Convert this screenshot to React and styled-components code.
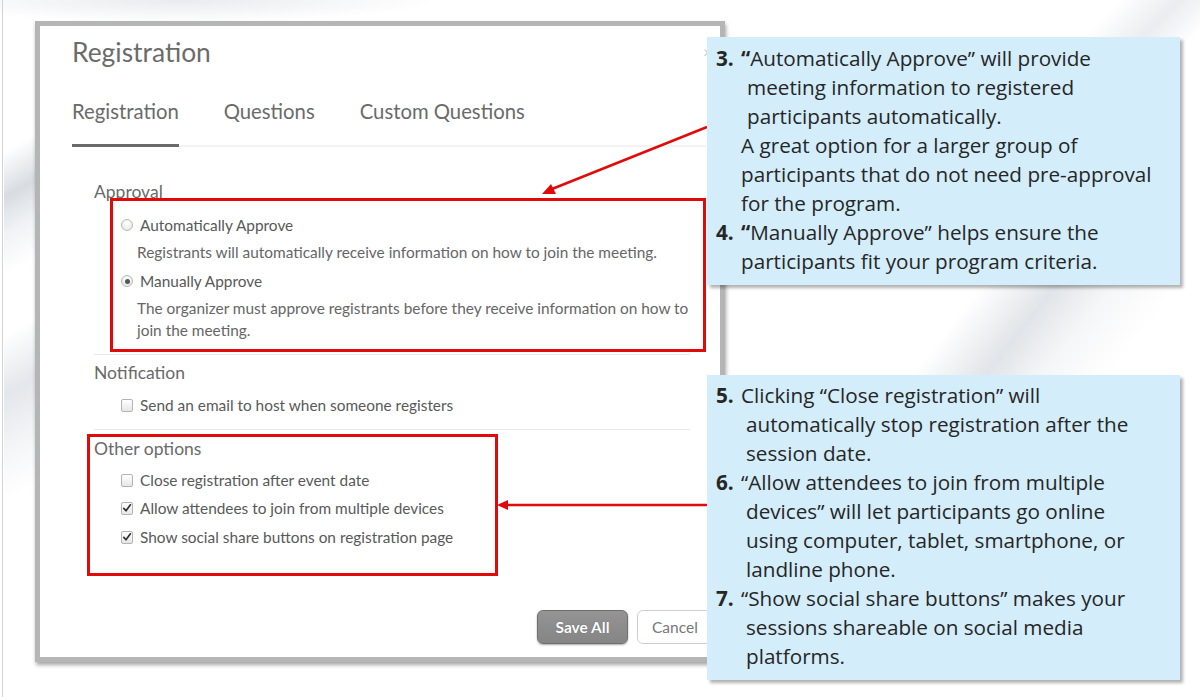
import React from "react";
import styled, { createGlobalStyle } from "styled-components";

const GlobalStyle = createGlobalStyle`
  html, body {
    margin: 0;
    padding: 0;
    background: #ffffff;
  }
  body {
    font-family: Lato, "Liberation Sans", sans-serif;
  }
`;

const Slide = styled.div`
  position: relative;
  width: 1200px;
  height: 697px;
  overflow: hidden;
  background:
    linear-gradient(to right, transparent 2px, #d2d2d2 2px, #d2d2d2 3px, transparent 3px) 0 0 / 4px 697px no-repeat,
    linear-gradient(150deg, transparent 20%, rgba(190, 197, 206, 0.6) 42%, rgba(226, 230, 235, 0.5) 60%, transparent 80%) 4px 110px / 32px 190px no-repeat,
    linear-gradient(150deg, transparent 15%, rgba(205, 210, 218, 0.55) 40%, rgba(232, 235, 239, 0.45) 65%, transparent 85%) 4px 300px / 32px 220px no-repeat,
    linear-gradient(128deg, transparent 30%, rgba(205, 210, 217, 0.6) 48%, rgba(236, 238, 241, 0.5) 62%, transparent 78%) 860px 283px / 340px 92px no-repeat,
    linear-gradient(135deg, transparent 40%, rgba(214, 218, 224, 0.5) 70%, transparent 95%) 1040px 0 / 160px 40px no-repeat,
    radial-gradient(ellipse 260px 22px at 180px 0, rgba(214, 218, 224, 0.55), transparent) 0 0 / 700px 24px no-repeat,
    #ffffff;
`;

const Stage = styled.div`
  display: flex;
  align-items: flex-start;
  padding: 21px 0 0 35px;
`;

/* ---------- dialog (screenshot) ---------- */

const Dialog = styled.section`
  box-sizing: border-box;
  width: 690px;
  height: 641px;
  background: #ffffff;
  border: 5px solid #b5b5b5;
  box-shadow: 1px 3px 4px rgba(0, 0, 0, 0.35);
  display: flex;
  flex-direction: column;
  padding: 10px 8px 13px 32px;
  color: #666;
`;

const Header = styled.div`
  display: flex;
  justify-content: space-between;
  align-items: flex-start;
`;

const Title = styled.h1`
  margin: 0;
  font-size: 26.4px;
  line-height: 32px;
  font-weight: 400;
  color: #6b6b6b;
`;

const Close = styled.span`
  margin-top: 9px;
  font-size: 15px;
  line-height: 15px;
  color: #c8c8c8;
`;

const TabBar = styled.div`
  display: flex;
  gap: 45px;
  margin: 31px 6px 0 0;
  border-bottom: 2px solid #f3f3f3;
`;

const Tab = styled.div`
  font-size: 20.3px;
  line-height: 24px;
  color: #6a6a6a;
  padding-bottom: 21px;
  margin-bottom: -2px;
  border-bottom: 3px solid ${(p) => (p.$active ? "#6b6b6b" : "transparent")};
`;

const Body = styled.div`
  display: flex;
  flex-direction: column;
  margin: 35px 22px 0 22px;
`;

const Section = styled.div`
  display: flex;
  flex-direction: column;
  padding: ${(p) => p.$pad || "0 0 13px"};
  border-top: ${(p) => (p.$divided ? "1px solid #e8e8e8" : "none")};
`;

const SectionLabel = styled.div`
  font-size: 17.5px;
  line-height: 20px;
  color: #6a6a6a;
`;

const OptionRow = styled.label`
  display: flex;
  align-items: center;
  gap: 7px;
  height: 22px;
  margin: ${(p) => p.$gap || 0}px 0 0 27px;
  font-size: 15.4px;
  color: #595959;
`;

const Desc = styled.div`
  margin: 5px 0 0 43px;
  font-size: 15.4px;
  line-height: 22px;
  color: #666;
  white-space: nowrap;
`;

const Radio = styled.span`
  position: relative;
  box-sizing: border-box;
  width: 12px;
  height: 12px;
  border-radius: 50%;
  border: 1px solid #b8b8b8;
  background: radial-gradient(circle at 50% 35%, #ffffff, #e2e2e2);
  flex-shrink: 0;

  &::after {
    content: "";
    display: ${(p) => (p.$checked ? "block" : "none")};
    position: absolute;
    left: 2.5px;
    top: 2.5px;
    width: 5px;
    height: 5px;
    border-radius: 50%;
    background: #555;
  }
`;

const Box = styled.span`
  box-sizing: border-box;
  display: flex;
  align-items: center;
  justify-content: center;
  width: 12px;
  height: 13px;
  border-radius: 2px;
  border: 1px solid #b3b3b3;
  background: linear-gradient(#ffffff, #e6e6e6);
  flex-shrink: 0;
`;

const Checkbox = ({ checked }) => (
  <Box>
    {checked && (
      <svg width="10" height="10" viewBox="0 0 10 10">
        <path d="M1.8 5.4 L4 7.8 L8.4 1.8" fill="none" stroke="#333" strokeWidth="1.7" strokeLinecap="round" strokeLinejoin="round" />
      </svg>
    )}
  </Box>
);

const Footer = styled.div`
  margin-top: auto;
  display: flex;
  justify-content: flex-end;
  gap: 9px;
`;

const SaveButton = styled.button`
  box-sizing: border-box;
  width: 91px;
  height: 34px;
  border-radius: 6px;
  border: 1px solid #6f6f6f;
  background: linear-gradient(#949494, #858585);
  box-shadow: 0 1px 2px rgba(0, 0, 0, 0.35);
  color: #ffffff;
  font-family: Lato, sans-serif;
  font-size: 15.5px;
  font-weight: 700;
  text-shadow: 0 0 1px rgba(0, 0, 0, 0.4);
`;

const CancelButton = styled.button`
  box-sizing: border-box;
  width: 75px;
  height: 34px;
  border-radius: 6px;
  border: 1px solid #cfcfcf;
  background: #ffffff;
  color: #777;
  font-family: Lato, sans-serif;
  font-size: 15.5px;
  text-align: left;
  padding-left: 14px;
`;

/* ---------- annotation layer ---------- */

const Annotations = styled.div`
  position: absolute;
  inset: 0;
  z-index: 1;
  pointer-events: none;
`;

const Highlight = styled.div`
  position: absolute;
  box-sizing: border-box;
  left: ${(p) => p.$x}px;
  top: ${(p) => p.$y}px;
  width: ${(p) => p.$w}px;
  height: ${(p) => p.$h}px;
  border: 3px solid #e10a0a;
`;

const ArrowCanvas = styled.svg`
  position: absolute;
  left: 0;
  top: 0;
`;

/* ---------- callouts ---------- */

const Callouts = styled.div`
  position: relative;
  z-index: 2;
  display: flex;
  flex-direction: column;
  gap: 90px;
  margin: 16px 0 0 -18px;
`;

const Callout = styled.div`
  box-sizing: border-box;
  width: 473px;
  height: ${(p) => p.$h}px;
  padding: ${(p) => p.$top}px 0 0 9px;
  background: #d3edfb;
  box-shadow: 3px 3px 3px rgba(0, 0, 0, 0.3);
  font-family: "Open Sans", "Liberation Sans", sans-serif;
  font-size: 20.7px;
  line-height: 29px;
  color: #262626;
`;

const Note = styled.div`
  display: flex;
`;

const Num = styled.span`
  width: 25px;
  flex-shrink: 0;
  font-weight: 700;
`;

const Lines = styled.div`
  display: flex;
  flex-direction: column;
`;

const Line = styled.span`
  padding-left: ${(p) => p.$indent || 0}px;
  white-space: nowrap;
`;

const Strong = styled.b`
  font-weight: 700;
`;

const topNotes = [
  {
    num: "3.",
    lines: [
      [<><Strong>“</Strong>Automatically Approve” will provide</>, 0],
      ["meeting information to registered", 6],
      ["participants automatically.", 6],
      ["A great option for a larger group of", 0],
      ["participants that do not need pre-approval", 0],
      ["for the program.", 0],
    ],
  },
  {
    num: "4.",
    lines: [
      [<><Strong>“</Strong>Manually Approve” helps ensure the</>, 0],
      ["participants fit your program criteria.", 0],
    ],
  },
];

const bottomNotes = [
  {
    num: "5.",
    lines: [
      ["Clicking “Close registration” will", 0],
      ["automatically stop registration after the", 5],
      ["session date.", 5],
    ],
  },
  {
    num: "6.",
    lines: [
      ["“Allow attendees to join from multiple", 0],
      ["devices” will let participants go online", 5],
      ["using computer, tablet, smartphone, or", 5],
      ["landline phone.", 5],
    ],
  },
  {
    num: "7.",
    lines: [
      ["“Show social share buttons” makes your", 0],
      ["sessions shareable on social media", 5],
      ["platforms.", 5],
    ],
  },
];

const NoteList = ({ notes }) =>
  notes.map((n) => (
    <Note key={n.num}>
      <Num>{n.num}</Num>
      <Lines>
        {n.lines.map(([text, indent], i) => (
          <Line key={i} $indent={indent}>
            {text}
          </Line>
        ))}
      </Lines>
    </Note>
  ));

export default function App() {
  return (
    <Slide>
      <GlobalStyle />
      <Stage>
        <Dialog>
          <Header>
            <Title>Registration</Title>
            <Close>×</Close>
          </Header>
          <TabBar>
            <Tab $active>Registration</Tab>
            <Tab>Questions</Tab>
            <Tab>Custom Questions</Tab>
          </TabBar>
          <Body>
            <Section>
              <SectionLabel>Approval</SectionLabel>
              <OptionRow $gap={12}>
                <Radio />
                Automatically Approve
              </OptionRow>
              <Desc>Registrants will automatically receive information on how to join the meeting.</Desc>
              <OptionRow $gap={7}>
                <Radio $checked />
                Manually Approve
              </OptionRow>
              <Desc>
                The organizer must approve registrants before they receive information on how to
                <br />
                join the meeting.
              </Desc>
            </Section>
            <Section $divided $pad="8px 0 13px">
              <SectionLabel>Notification</SectionLabel>
              <OptionRow $gap={11}>
                <Checkbox />
                Send an email to host when someone registers
              </OptionRow>
            </Section>
            <Section $divided $pad="9px 0 0">
              <SectionLabel>Other options</SectionLabel>
              <OptionRow $gap={10}>
                <Checkbox />
                Close registration after event date
              </OptionRow>
              <OptionRow $gap={6}>
                <Checkbox checked />
                Allow attendees to join from multiple devices
              </OptionRow>
              <OptionRow $gap={7}>
                <Checkbox checked />
                Show social share buttons on registration page
              </OptionRow>
            </Section>
          </Body>
          <Footer>
            <SaveButton>Save All</SaveButton>
            <CancelButton>Cancel</CancelButton>
          </Footer>
        </Dialog>

        <Callouts>
          <Callout $h={248} $top={7}>
            <NoteList notes={topNotes} />
          </Callout>
          <Callout $h={305} $top={6}>
            <NoteList notes={bottomNotes} />
          </Callout>
        </Callouts>
      </Stage>

      <Annotations>
        <Highlight $x={110} $y={198} $w={596} $h={154} />
        <Highlight $x={87} $y={434} $w={411} $h={142} />
        <ArrowCanvas width="1200" height="697" viewBox="0 0 1200 697">
          <line x1="707" y1="127" x2="552" y2="189" stroke="#e10a0a" strokeWidth="2.5" />
          <polygon points="542,194 551,184 556,194" fill="#e10a0a" />
          <line x1="707" y1="505" x2="507" y2="505" stroke="#e10a0a" strokeWidth="2.5" />
          <polygon points="497,505 508,500 508,510" fill="#e10a0a" />
        </ArrowCanvas>
      </Annotations>
    </Slide>
  );
}
